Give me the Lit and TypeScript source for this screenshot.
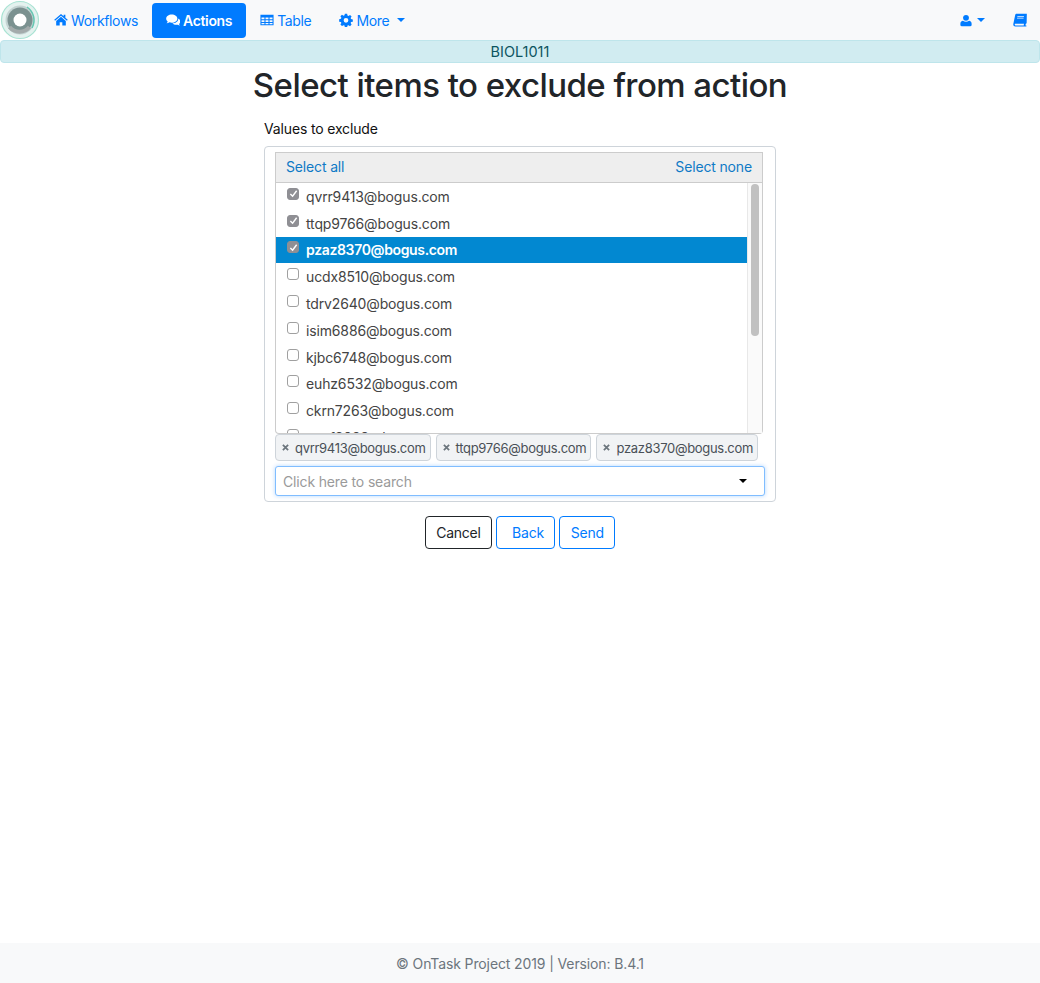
import { LitElement, html, css, svg } from 'lit';
import { customElement } from 'lit/decorators.js';

const items = [
  'qvrr9413@bogus.com',
  'ttqp9766@bogus.com',
  'pzaz8370@bogus.com',
  'ucdx8510@bogus.com',
  'tdrv2640@bogus.com',
  'isim6886@bogus.com',
  'kjbc6748@bogus.com',
  'euhz6532@bogus.com',
  'ckrn7263@bogus.com',
  'vaqf3029@bogus.com',
];
const selected = items.slice(0, 3);

const icons = {
  home: svg`<path d="M8 1.200.3 7.700l.9 1.100L8 3.100l6.800 5.700.9-1.100-2.700-2.300V2h-2v1.600zM8 4.400 2.500 9v5.200h4v-3.600h3v3.600h4V9z"/>`,
  comments: svg`<path d="M6.600 1.800C3 1.800.2 3.900.2 6.500c0 1.300.7 2.400 1.800 3.300-.2.800-.7 1.400-1.400 2 1.200 0 2.400-.4 3.300-1.100.8.300 1.700.4 2.700.4 3.600 0 6.400-2.100 6.400-4.600s-2.800-4.700-6.400-4.700z"/><path d="M14 6.200c.2 3.300-3.100 5.600-6.700 5.700 1.100 1 2.600 1.600 4.300 1.600.6 0 1.300-.1 1.800-.2.800.5 1.700.9 2.600.9-.5-.4-.9-1-1.200-1.600 1-.7 1.700-1.800 1.700-3 0-1.400-1-2.700-2.500-3.400z"/>`,
  table: svg`<path fill-rule="evenodd" d="M.5 2h15v12H.5zm1.200 3.200v2h3.400v-2zm4.600 0v2h3.400v-2zm4.600 0v2h3.400v-2zM1.700 8.300v1.900h3.400V8.300zm4.600 0v1.900h3.400V8.300zm4.600 0v1.900h3.400V8.300zm-9.200 3v1.600h3.400v-1.600zm4.600 0v1.600h3.400v-1.600zm4.600 0v1.600h3.400v-1.600z"/>`,
  cog: svg`<path fill-rule="evenodd" d="M6.700.8h2.600l.4 2 1.100.5 1.800-1.100 1.800 1.800-1.100 1.700.5 1.200 2 .4v2.600l-2 .4-.5 1.200 1.100 1.700-1.800 1.800-1.800-1.100-1.100.5-.4 2H6.700l-.4-2-1.100-.5-1.800 1.100-1.800-1.800 1.100-1.700-.5-1.200-2-.4V7.100l2-.4.500-1.200-1.100-1.700 1.800-1.800 1.800 1.100 1.100-.5zM8 5.600a2.700 2.700 0 1 0 0 5.400 2.700 2.700 0 0 0 0-5.400z"/>`,
  user: svg`<circle cx="8" cy="4.400" r="3.900"/><path d="M2.100 15.500c-1 0-1.600-.7-1.600-1.600v-1.700c0-2.200 1.400-4 3.500-4 1 .9 2.500 1.400 4 1.400s3-.5 4-1.400c2.100 0 3.500 1.800 3.500 4v1.700c0 .9-.6 1.600-1.600 1.600z"/>`,
  book: svg`<path fill-rule="evenodd" d="M4.200.8h11.600l-.2 10.800-.9.700c-.4 1-.5 1.600-.3 2.100h.9v1H2.800C.9 15.400 0 14.200.4 12.400L2.500 2.300C2.700 1.300 3.300.8 4.200.8zM5 3.500v.8h7.500v-.8zM4.600 5.500v.8h7.500v-.8zM2.200 12.300c-.5 1.300 0 2.100.9 2.100h9.300c-.2-.6-.1-1.300.2-2.100z"/>`,
};

const icon = (name: keyof typeof icons) =>
  html`<svg class="icon" viewBox="0 0 16 16" fill="currentColor">${icons[name]}</svg>`;

@customElement('app-root')
export class AppRoot extends LitElement {
  static styles = css`
    :host {
      display: flex;
      flex-direction: column;
      min-height: 983px;
      font-family: Inter, 'Liberation Sans', sans-serif;
      font-size: 14px;
      letter-spacing: -0.15px;
      color: #212529;
      background: #fff;
    }
    * {
      box-sizing: border-box;
    }
    nav {
      display: flex;
      align-items: center;
      height: 40px;
      letter-spacing: -0.35px;
      background: #f8f9fa;
    }
    .logo {
      display: block;
      width: 40px;
      height: 40px;
      flex: none;
      background: #fff;
    }
    .nav-link {
      display: flex;
      align-items: center;
      gap: 3px;
      height: 35px;
      padding: 0 14px;
      border-radius: 4px;
      color: #007bff;
      text-decoration: none;
    }
    .nav-link.active {
      background: #007bff;
      color: #fff;
      font-weight: 600;
      letter-spacing: -0.35px;
    }
    .nav-link.more {
      margin-left: 0;
    }
    .icon {
      width: 14px;
      height: 14px;
      flex: none;
    }
    .caret {
      width: 0;
      height: 0;
      margin-left: 5px;
      border-top: 4px solid currentColor;
      border-left: 4px solid transparent;
      border-right: 4px solid transparent;
    }
    .spacer {
      flex: 1;
    }
    .user {
      padding: 0;
      margin-right: 28px;
    }
    .user .icon {
      width: 12px;
      height: 13px;
    }
    .user .caret {
      margin-left: 2px;
    }
    .book {
      padding: 0;
      margin-right: 13px;
    }
    .course {
      height: 23px;
      line-height: 22px;
      text-align: center;
      font-size: 14.5px;
      letter-spacing: 0;
      color: #0c5460;
      background: #d1ecf1;
      border: 1px solid #bee5eb;
      border-radius: 4px;
    }
    h1 {
      margin: 0;
      height: 45px;
      line-height: 45px;
      text-align: center;
      font-size: 33px;
      font-weight: 500;
      letter-spacing: -0.55px;
    }
    main {
      flex: 1;
      width: 512px;
      margin: 0 auto;
    }
    .label {
      margin-top: 10px;
      line-height: 21px;
      color: #111;
    }
    .box {
      margin-top: 7px;
      height: 356px;
      padding: 5px 10px;
      border: 1px solid #ced4da;
      border-radius: 4px;
    }
    .picker {
      width: 488px;
    }
    .picker-head {
      display: flex;
      justify-content: space-between;
      align-items: center;
      height: 31px;
      padding: 0 10px 2px;
      background: #eee;
      border: 1px solid #ccc;
    }
    .picker-head a {
      color: #0f7ac6;
      text-decoration: none;
    }
    .rows {
      display: flex;
      height: 251px;
      border: 1px solid #ccc;
      border-top: none;
      border-radius: 0 0 4px 4px;
    }
    .list {
      flex: 1;
      min-width: 0;
      overflow: hidden;
    }
    .track {
      width: 15px;
      flex: none;
      padding: 1px 3px;
      background: #fafafa;
      border-left: 1px solid #e8e8e8;
    }
    .thumb {
      height: 152px;
      background: #c1c1c1;
      border-radius: 4px;
    }
    .row {
      display: flex;
      align-items: center;
      height: 26.8px;
      padding-left: 11px;
      color: #444;
    }
    .row.active {
      background: #0288d1;
      color: #fff;
      font-weight: 600;
      letter-spacing: -0.35px;
    }
    .check {
      display: flex;
      align-items: center;
      justify-content: center;
      width: 12px;
      height: 12px;
      margin: -5px 7px 0 0;
      flex: none;
      background: #fff;
      border: 1px solid #a0a0a0;
      border-radius: 3px;
    }
    .check.on {
      background: #8f8f94;
      border-color: #8f8f94;
    }
    .check svg {
      width: 9px;
      height: 9px;
    }
    .chips {
      display: flex;
      gap: 5px;
      height: 27px;
      white-space: nowrap;
    }
    .chip {
      display: flex;
      align-items: center;
      gap: 6px;
      height: 27px;
      padding: 0 4px 0 6px;
      color: #495057;
      font-size: 13px;
      letter-spacing: -0.3px;
      background: #f1f3f5;
      border: 1px solid #ced4da;
      border-radius: 4px;
    }
    .chip .x {
      width: 7px;
      height: 7px;
      flex: none;
    }
    .search {
      display: flex;
      align-items: center;
      justify-content: space-between;
      width: 490px;
      height: 30px;
      margin-top: 5px;
      padding: 0 17px 0 7px;
      color: #9a9a9a;
      background: #fff;
      border: 1px solid #80bdff;
      border-radius: 3px;
      box-shadow: 0 0 4px rgba(0, 123, 255, 0.3);
    }
    .search .caret {
      color: #000;
    }
    .actions {
      display: flex;
      justify-content: center;
      gap: 4px;
      margin-top: 14px;
    }
    .btn {
      display: flex;
      align-items: center;
      height: 33px;
      padding: 0 10.5px;
      font: inherit;
      letter-spacing: -0.25px;
      color: #007bff;
      background: #fff;
      border: 1px solid #007bff;
      border-radius: 4px;
    }
    .btn.cancel {
      color: #212529;
      border-color: #212529;
    }
    .btn.back {
      padding: 0 10.5px 0 15px;
    }
    footer {
      height: 40px;
      line-height: 42px;
      text-align: center;
      letter-spacing: -0.12px;
      color: #6c757d;
      background: #f8f9fa;
    }
  `;

  private logo() {
    return html`<svg class="logo" viewBox="0 0 40 40">
      <circle cx="20" cy="20" r="18.500" fill="#e4f2ef" stroke="#a9e3d3" stroke-width="1.200" />
      <circle cx="20" cy="20" r="14.500" fill="#c3d3d2" />
      <circle cx="20" cy="20" r="12.500" fill="#7b9190" />
      <path d="M9.500 27a13 13 0 0 0 20 0" fill="none" stroke="#a3abab" stroke-width="4" />
      <path d="M27 7a16 16 0 0 1 5 21" fill="none" stroke="#63c8b2" stroke-width="1.500" />
      <circle cx="20" cy="20" r="6.500" fill="#fff" />
    </svg>`;
  }

  render() {
    return html`
      <nav>
        ${this.logo()}
        <a class="nav-link">${icon('home')}Workflows</a>
        <a class="nav-link active">${icon('comments')}Actions</a>
        <a class="nav-link">${icon('table')}Table</a>
        <a class="nav-link more">${icon('cog')}More<span class="caret"></span></a>
        <span class="spacer"></span>
        <a class="nav-link user">${icon('user')}<span class="caret"></span></a>
        <a class="nav-link book">${icon('book')}</a>
      </nav>
      <div class="course">BIOL1011</div>
      <h1>Select items to exclude from action</h1>
      <main>
        <div class="label">Values to exclude</div>
        <div class="box">
          <div class="picker">
            <div class="picker-head"><a>Select all</a><a>Select none</a></div>
            <div class="rows">
              <div class="list">
                ${items.map((item, i) => {
                  const on = selected.includes(item);
                  return html`<div class="row ${i === 2 ? 'active' : ''}">
                    <span class="check ${on ? 'on' : ''}">
                      ${on
                        ? html`<svg viewBox="0 0 10 10" fill="none" stroke="#fff" stroke-width="1.600">
                            <path d="M1.500 5.500 4 8l4.500-6" />
                          </svg>`
                        : ''}
                    </span>
                    ${item}
                  </div>`;
                })}
              </div>
              <div class="track"><div class="thumb"></div></div>
            </div>
          </div>
          <div class="chips">
            ${selected.map(
              (item) => html`<span class="chip">
                <svg class="x" viewBox="0 0 8 8" stroke="#6c757d" stroke-width="2"><path d="M1 1l6 6M7 1 1 7" /></svg>
                ${item}
              </span>`,
            )}
          </div>
          <div class="search">Click here to search<span class="caret"></span></div>
        </div>
        <div class="actions">
          <button class="btn cancel">Cancel</button>
          <button class="btn back">Back</button>
          <button class="btn">Send</button>
        </div>
      </main>
      <footer>© OnTask Project 2019 | Version: B.4.1</footer>
    `;
  }
}
